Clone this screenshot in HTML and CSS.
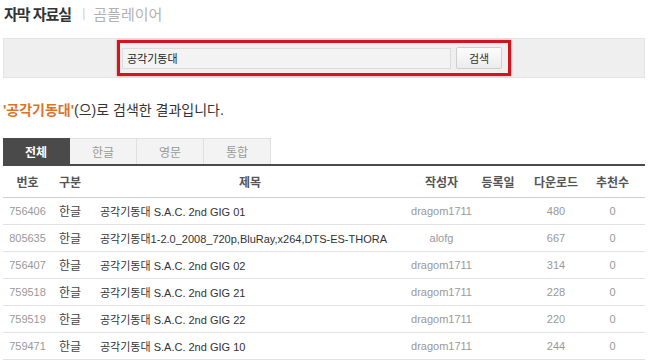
FILE: index.html
```html
<!DOCTYPE html>
<html lang="ko">
<head>
    <meta charset="UTF-8">
    <meta name="viewport" content="width=device-width, initial-scale=1.0">
    <title>자막 자료실</title>
    <link rel="stylesheet" href="styles.css">
</head>
<body>
    <div class="page">
        <div class="top">
            <h1>자막 자료실</h1>
            <span class="sep">|</span>
            <span class="brand">곰플레이어</span>
        </div>

        <div class="searchbar">
            <form class="search">
                <input type="text" class="query" value="공각기동대" />
                <button type="button" class="btn">검색</button>
            </form>
        </div>

        <p class="result"><b>'공각기동대'</b>(으)로 검색한 결과입니다.</p>

        <div class="tabs">
            <span class="tab on">전체</span>
            <span class="tab">한글</span>
            <span class="tab">영문</span>
            <span class="tab">통합</span>
        </div>

        <table class="list">
            <thead>
                <tr>
                    <th class="c-no">번호</th>
                    <th class="c-lang">구분</th>
                    <th class="c-title">제목</th>
                    <th class="c-user">작성자</th>
                    <th class="c-date">등록일</th>
                    <th class="c-down">다운로드</th>
                    <th class="c-rec">추천수</th>
                </tr>
            </thead>
            <tbody>
                <tr><td class="c-no">756406</td><td class="c-lang">한글</td><td class="c-title">공각기동대 S.A.C. 2nd GIG 01</td><td class="c-user">dragom1711</td><td class="c-date"></td><td class="c-down">480</td><td class="c-rec">0</td></tr>
                <tr><td class="c-no">805635</td><td class="c-lang">한글</td><td class="c-title">공각기동대1-2.0_2008_720p,BluRay,x264,DTS-ES-THORA</td><td class="c-user">alofg</td><td class="c-date"></td><td class="c-down">667</td><td class="c-rec">0</td></tr>
                <tr><td class="c-no">756407</td><td class="c-lang">한글</td><td class="c-title">공각기동대 S.A.C. 2nd GIG 02</td><td class="c-user">dragom1711</td><td class="c-date"></td><td class="c-down">314</td><td class="c-rec">0</td></tr>
                <tr><td class="c-no">759518</td><td class="c-lang">한글</td><td class="c-title">공각기동대 S.A.C. 2nd GIG 21</td><td class="c-user">dragom1711</td><td class="c-date"></td><td class="c-down">228</td><td class="c-rec">0</td></tr>
                <tr><td class="c-no">759519</td><td class="c-lang">한글</td><td class="c-title">공각기동대 S.A.C. 2nd GIG 22</td><td class="c-user">dragom1711</td><td class="c-date"></td><td class="c-down">220</td><td class="c-rec">0</td></tr>
                <tr><td class="c-no">759471</td><td class="c-lang">한글</td><td class="c-title">공각기동대 S.A.C. 2nd GIG 10</td><td class="c-user">dragom1711</td><td class="c-date"></td><td class="c-down">244</td><td class="c-rec">0</td></tr>
            </tbody>
        </table>
    </div>
</body>
</html>
```

FILE: styles.css
```css
*{margin:0; padding:0; box-sizing:border-box;}
body{font-family:"Liberation Sans", "Noto Sans CJK KR", sans-serif; background:#fff; color:#333;}
.page{width:650px; height:364px; overflow:hidden; padding:0 5px 0 3px;}

.top{display:flex; align-items:center; height:25px; padding-top:1px;}
.top h1{font-size:15px; font-weight:bold; color:#333; letter-spacing:-1px; padding-left:1px;}
.sep{font-size:12px; color:#ccc; margin:0 8px 0 11px;}
.brand{font-size:15px; color:#b2b2b2;}

.searchbar{margin-top:13px; height:40px; background:#efefef; border:1px solid #e4e4e4; display:flex; justify-content:center; padding-top:1px; padding-right:20px;}
.search{display:flex; align-items:center; gap:5px; width:394px; height:36px; border:3px solid #d4141c; box-shadow:0 0 2px rgba(220,30,30,.5); padding:0 6px 0 2px;}
.query{width:329px; height:21px; border:1px solid #dcdcdc; background:#f3f3f3; font-family:"Liberation Sans", "Noto Sans CJK KR", sans-serif; font-size:11px; color:#222; padding:0 4px; outline:0;}
.btn{width:46px; height:22px; border:1px solid #cfcfcf; border-radius:2px; background:linear-gradient(#fdfdfd, #ececec); font-family:"Noto Sans CJK KR", sans-serif; font-size:11px; color:#333; cursor:pointer;}

.result{margin-top:23px; font-size:14px; color:#333; height:18px; line-height:18px;}
.result b{color:#d8742c;}

.tabs{display:flex; margin-top:19px; height:28px; border-bottom:2px solid #4a4a4a;}
.tab{width:67px; display:flex; align-items:center; justify-content:center; font-size:12px; color:#999; background:#f3f3f3; border:1px solid #e0e0e0; border-bottom:0; border-left:0;}
.tab.on{background:#4a4a4a; color:#fff; font-weight:bold; border-color:#4a4a4a;}

.list{width:642px; border-collapse:collapse; table-layout:fixed;}
.list th{height:31px; font-size:12px; color:#555; font-weight:bold; border-bottom:1px solid #cfcfcf; text-align:center; white-space:nowrap;}
.list td{height:27px; font-size:11px; color:#999; border-bottom:1px solid #e2e2e2; text-align:center; white-space:nowrap; overflow:hidden;}
.c-no{width:49px;}
.list th.c-lang, .list td.c-lang{width:43px; text-align:left; padding-left:7px;}
.list td.c-lang{color:#444; font-size:12px;}
.list td.c-title{text-align:left; padding-left:5px; color:#333;}
.c-title{width:310px;}
.c-user{width:73px;}
.c-date{width:40px;}
.c-down{width:76px;}
.list .c-rec{width:51px; padding-right:14px;}
```
